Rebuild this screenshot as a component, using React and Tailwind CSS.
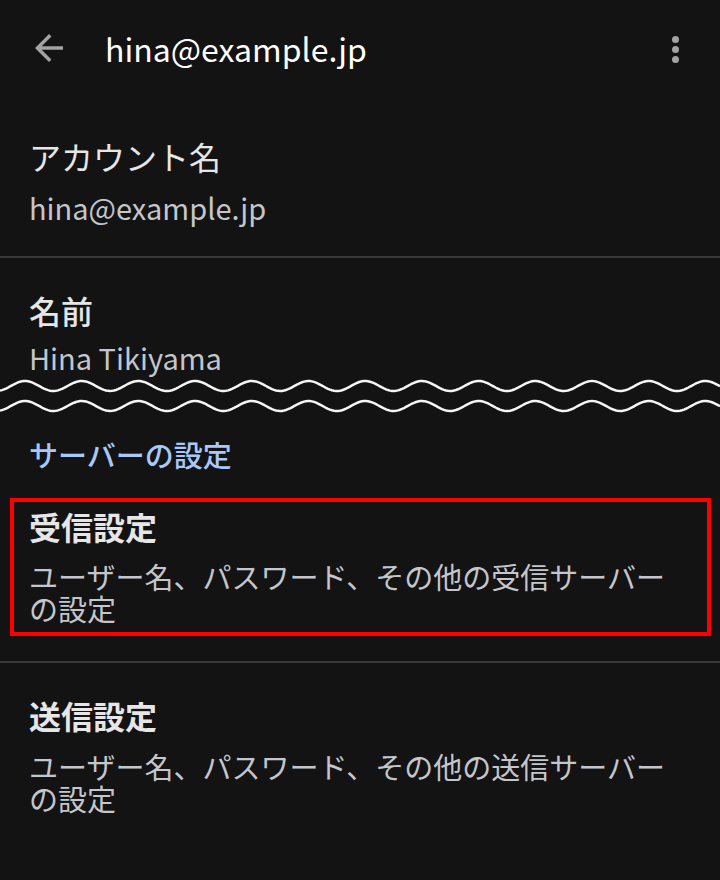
const wavePath = (cy) => {
    let d = "";
    for (let x = 0; x <= 720; x += 2) {
        const y = cy - 5 * Math.cos((2 * Math.PI * (x - 25)) / 56.7);
        d += (x === 0 ? "M" : "L") + x + " " + y.toFixed(2) + " ";
    }
    return d;
};

const Waves = () => (
    <svg width="720" height="46" viewBox="0 0 720 46" className="block">
        <path d={wavePath(13)} fill="none" stroke="#f5f5f5" strokeWidth="2.5" />
        <path d={wavePath(33)} fill="none" stroke="#f5f5f5" strokeWidth="2.5" />
    </svg>
);

const Divider = () => <div className="h-[2px] bg-[#393939]" />;

const App = () => {
    return (
        <div
            className="w-[720px] h-[880px] bg-[#131313] overflow-hidden"
            style={{ fontFamily: '"Noto Sans CJK JP", "Noto Sans", sans-serif' }}
        >
            {/* top bar */}
            <div className="h-[96px] flex items-center relative">
                <svg width="42" height="42" viewBox="0 0 24 24" className="ml-[28px] shrink-0">
                    <path d="M20 11H7.83l5.59-5.59L12 4l-8 8 8 8 1.41-1.41L7.83 13H20v-2z" fill="#a3a3a3" />
                </svg>
                <div className="ml-[35px] text-[32px] leading-[40px] text-white">hina@example.jp</div>
                <div className="ml-auto mr-[41px] flex flex-col gap-[3px] mt-[2px]">
                    <span className="w-[7px] h-[7px] rounded-full bg-[#a3a3a3]" />
                    <span className="w-[7px] h-[7px] rounded-full bg-[#a3a3a3]" />
                    <span className="w-[7px] h-[7px] rounded-full bg-[#a3a3a3]" />
                </div>
            </div>

            {/* account name */}
            <div className="pl-[29px] pt-[40px] pb-[33px]">
                <div className="text-[32px] leading-[40px] text-[#e6e6e6]">アカウント名</div>
                <div className="mt-[15px] text-[29px] leading-[32px] text-[#c4c6cc]">hina@example.jp</div>
            </div>
            <Divider />

            {/* name */}
            <div className="pl-[29px] pt-[32px]">
                <div className="text-[32px] leading-[40px] text-[#e6e6e6] font-medium">名前</div>
                <div className="mt-[11px] text-[29px] leading-[32px] text-[#c4c6cc]">Hina Tikiyama</div>
            </div>

            <Waves />

            {/* server settings */}
            <div className="pl-[29px] mt-[17px] text-[29px] leading-[36px] text-[#a8c7fa] font-medium">
                サーバーの設定
            </div>

            <div className="relative pl-[29px] pr-[28px] pt-[34px] pb-[37px]">
                <div className="text-[32px] leading-[40px] text-[#e6e6e6] font-bold">受信設定</div>
                <div className="mt-[14px] text-[29px] leading-[32px] text-[#c4c6cc]">
                    ユーザー名、パスワード、その他の受信サーバーの設定
                </div>
                <div className="absolute left-[10px] right-[9px] top-[26px] bottom-[25px] border-4 border-[#ff0000]" />
            </div>
            <Divider />

            <div className="pl-[29px] pr-[28px] pt-[32px]">
                <div className="text-[32px] leading-[40px] text-[#e6e6e6] font-bold">送信設定</div>
                <div className="mt-[15px] text-[29px] leading-[32px] text-[#c4c6cc]">
                    ユーザー名、パスワード、その他の送信サーバーの設定
                </div>
            </div>
        </div>
    );
};

export default App;
